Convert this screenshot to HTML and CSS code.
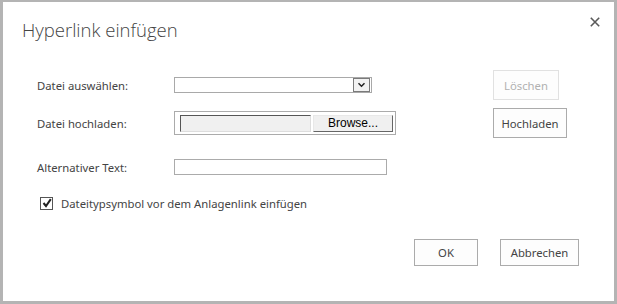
FILE: index.html
```html
<!DOCTYPE html>
<html lang="de">
<head>
  <meta charset="UTF-8" />
  <title>Hyperlink einfügen</title>
  <link rel="stylesheet" href="styles.css">
</head>
<body>

  <div class="dialog">
    <div class="dialog-head">
      <h1 class="dialog-title">Hyperlink einfügen</h1>
      <span class="close-btn" title="Schließen">
        <svg width="10" height="10" viewBox="0 0 10 10">
          <path d="M0.8 0.8 L9.2 9.2 M9.2 0.8 L0.8 9.2" stroke="#5a5a5a" stroke-width="1.6" fill="none"/>
        </svg>
      </span>
    </div>

    <div class="form">
      <div class="row">
        <label class="row-label">Datei auswählen:</label>
        <div class="row-field">
          <div class="select">
            <span class="select-arrow">
              <svg width="9" height="6" viewBox="0 0 9 6">
                <path d="M1.5 1.2 L4.5 4.2 L7.5 1.2" stroke="#222" stroke-width="1.5" fill="none"/>
              </svg>
            </span>
          </div>
        </div>
        <span class="btn btn-disabled">Löschen</span>
      </div>

      <div class="row row-upload">
        <label class="row-label">Datei hochladen:</label>
        <div class="row-field">
          <div class="file-box">
            <span class="file-path"></span>
            <span class="file-browse">Browse...</span>
          </div>
        </div>
        <span class="btn btn-upload">Hochladen</span>
      </div>

      <div class="row row-alt">
        <label class="row-label">Alternativer Text:</label>
        <div class="row-field">
          <span class="text-input"></span>
        </div>
      </div>

      <div class="row row-check">
        <span class="checkbox">
          <svg width="10" height="10" viewBox="0 0 10 10">
            <path d="M1.5 5 L4 8 L8.8 1.2" stroke="#222" stroke-width="2" fill="none"/>
          </svg>
        </span>
        <span class="check-label">Dateitypsymbol vor dem Anlagenlink einfügen</span>
      </div>
    </div>

    <div class="dialog-foot">
      <span class="btn btn-ok">OK</span>
      <span class="btn btn-cancel">Abbrechen</span>
    </div>
  </div>

</body>
</html>
```

FILE: styles.css
```css
* {
  box-sizing: border-box;
  margin: 0;
  padding: 0;
}

body {
  font-family: 'Noto Sans', sans-serif;
  font-size: 11.3px;
  color: #444;
  background: #fff;
}

.dialog {
  width: 617px;
  height: 304px;
  border: 3px solid #b4b4b4;
  border-top-width: 2px;
  background: #fff;
}

.dialog-head {
  display: flex;
  justify-content: space-between;
  align-items: flex-start;
  padding: 14px 14px 0 19px;
  height: 68px;
}

.dialog-title {
  font-family: 'Open Sans', sans-serif;
  font-weight: 300;
  font-size: 18.5px;
  line-height: 28px;
  color: #444;
}

.close-btn {
  display: flex;
  margin-top: 1px;
}

.form {
  padding-left: 34px;
}

.row {
  display: flex;
  align-items: center;
  height: 30px;
}

.row-upload {
  margin-top: 8px;
}

.row-alt {
  margin-top: 20px;
  height: 18px;
}

.row-check {
  margin-top: 18px;
  height: 18px;
  padding-left: 3px;
}

.row-label {
  width: 137px;
}

.row-field {
  width: 319px;
}

.select {
  width: 198px;
  height: 16px;
  border: 1px solid #a9a9a9;
  display: flex;
  justify-content: flex-end;
  align-items: center;
  padding-right: 1px;
}

.select-arrow {
  width: 17px;
  height: 14px;
  border: 1px solid #7a7a7a;
  background: #f2f2f2;
  display: flex;
  align-items: center;
  justify-content: center;
}

.file-box {
  width: 222px;
  height: 24px;
  border: 1px solid #ababab;
  display: flex;
  align-items: center;
  padding-left: 5px;
  gap: 2px;
}

.file-path {
  width: 131px;
  height: 17px;
  background: #f0f0f0;
  border: 1px solid #ddd;
  border-top-color: #555;
  border-left-color: #555;
}

.file-browse {
  width: 80px;
  height: 17px;
  background: #f0f0f0;
  border: 1px solid #666;
  border-top-color: #e8e8e8;
  border-left-color: #e8e8e8;
  font-family: 'Liberation Sans', Arial, sans-serif;
  font-size: 12px;
  color: #000;
  display: flex;
  align-items: center;
  justify-content: center;
}

.text-input {
  display: block;
  width: 213px;
  height: 16px;
  border: 1px solid #ababab;
}

.checkbox {
  width: 13px;
  height: 13px;
  border: 1px solid #555;
  display: flex;
  align-items: center;
  justify-content: center;
  margin-right: 8px;
}

.btn {
  display: flex;
  align-items: center;
  justify-content: center;
  height: 30px;
  border: 1px solid #ababab;
  background: #fdfdfd;
  color: #444;
}

.btn-disabled {
  width: 66px;
  border-color: #e1e1e1;
  color: #b1b1b1;
}

.btn-upload {
  width: 74px;
}

.dialog-foot {
  display: flex;
  justify-content: flex-end;
  gap: 22px;
  padding: 27px 35px 0 0;
}

.btn-ok {
  width: 64px;
  height: 27px;
}

.btn-cancel {
  width: 79px;
  height: 27px;
}
```
